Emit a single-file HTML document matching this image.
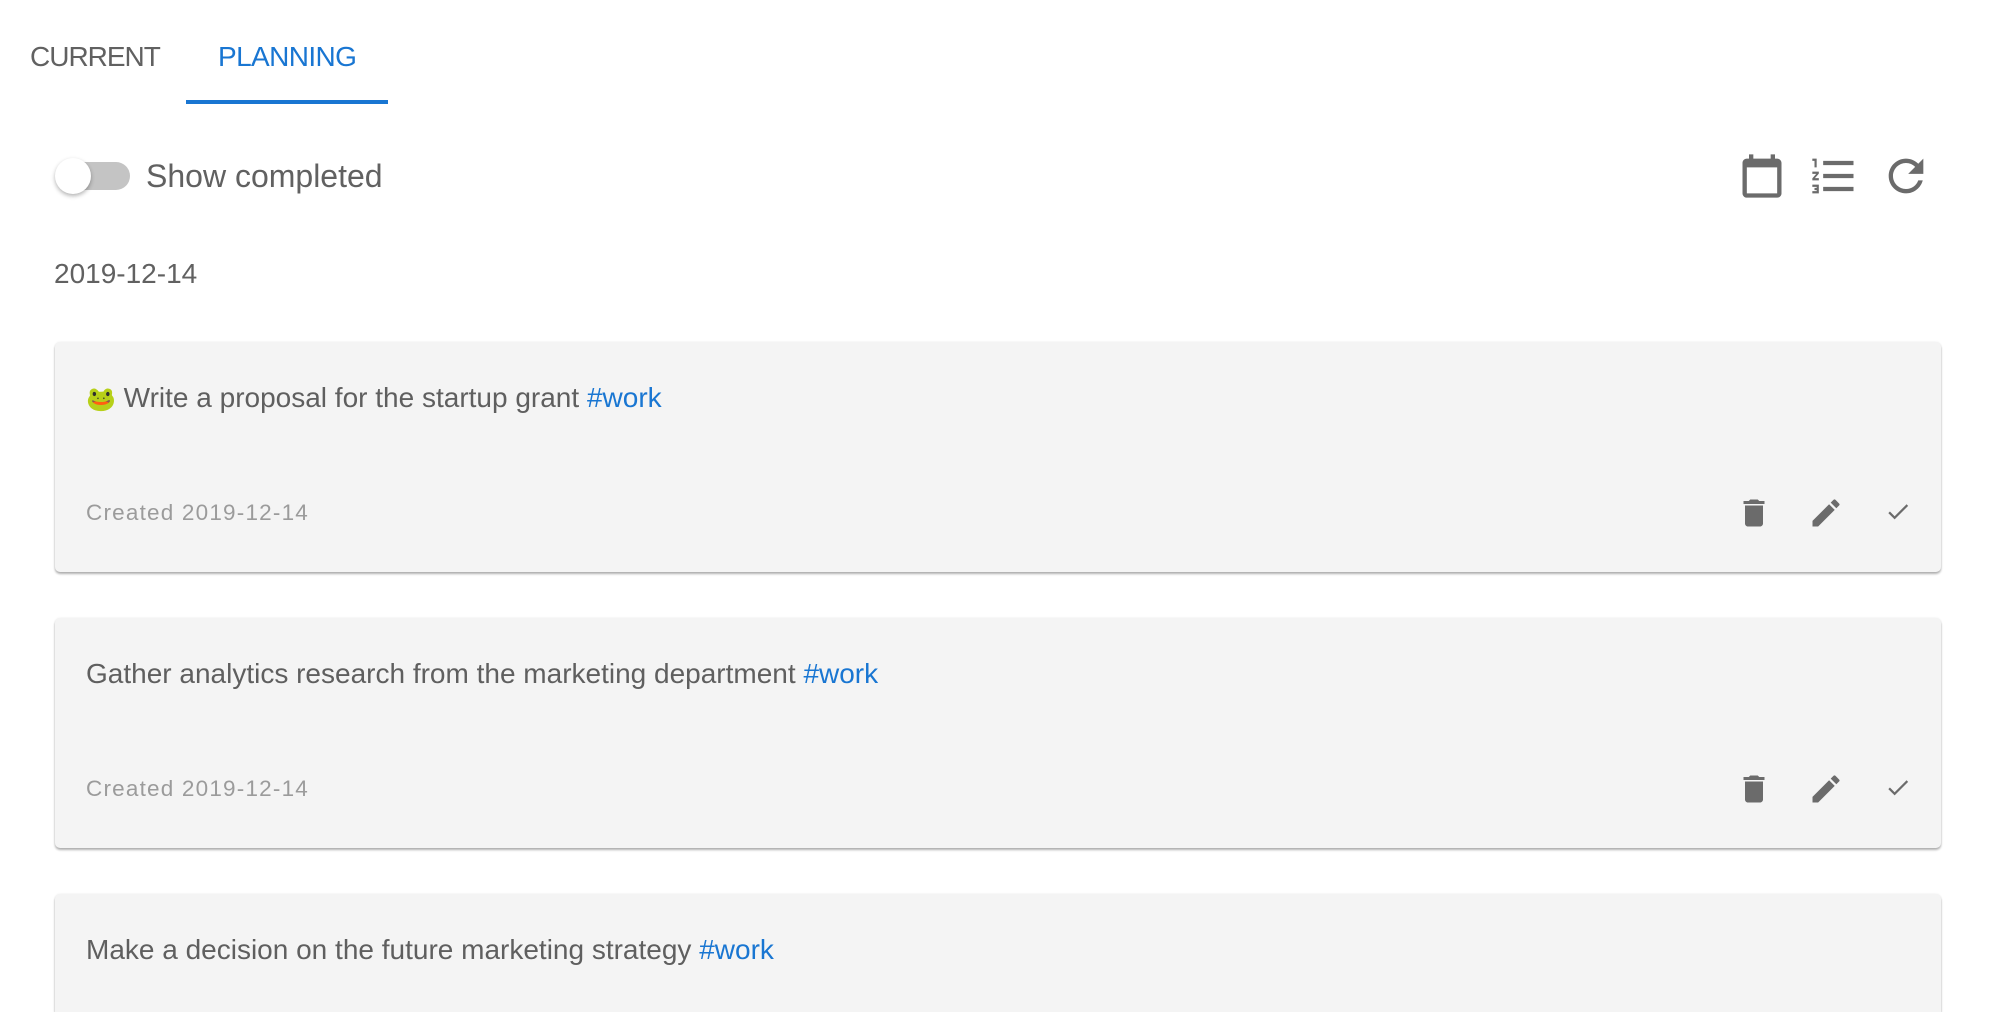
<!DOCTYPE html>
<html style="overflow:hidden;height:1012px"><head><meta charset="utf-8"><style>
body{margin:0;width:1998px;height:1012px;overflow:hidden;background:#fff;font-family:"Liberation Sans",sans-serif;color:#616161;position:relative}
.a{position:absolute;white-space:nowrap}
.card{position:absolute;left:55px;width:1886px;height:230px;background:#f4f4f4;border-radius:5px;box-shadow:0 2px 2px rgba(0,0,0,.3),0 0 2px rgba(0,0,0,.08)}
.t{position:absolute;left:31px;top:40px;font-size:28px;color:#5f5f5f}
.c{position:absolute;left:31px;top:158px;font-size:22.5px;color:#9b9b9b;letter-spacing:1.2px}
.tag{color:#1976d2}
.ic{position:absolute;top:153px}
</style></head><body>
<div class="a" style="left:30px;top:41px;font-size:28px;color:#616161;letter-spacing:-1px">CURRENT</div>
<div class="a" style="left:218px;top:41px;font-size:28px;color:#1976d2;letter-spacing:-.6px">PLANNING</div>
<div class="a" style="left:186px;top:100px;width:202px;height:4px;background:#1976d2"></div>

<div class="a" style="left:56px;top:162px;width:74px;height:28px;border-radius:14px;background:#c4c4c4"></div>
<div class="a" style="left:55px;top:158px;width:36px;height:36px;border-radius:50%;background:#fff;box-shadow:0 2px 4px rgba(0,0,0,.3)"></div>
<div class="a" style="left:146px;top:158px;font-size:32px;color:#616161">Show completed</div>

<svg class="a" style="left:1736px;top:150px" width="52" height="52" viewBox="0 0 24 24"><path fill="#6b6b6b" d="M19 4h-1V2h-2v2H8V2H6v2H5c-1.1 0-2 .9-2 2v14c0 1.1.9 2 2 2h14c1.1 0 2-.9 2-2V6c0-1.1-.9-2-2-2zm0 16H5V8h14v12z"/></svg>
<svg class="a" style="left:1808px;top:150px" width="52" height="52" viewBox="0 0 24 24"><path fill="#6b6b6b" d="M2 17h2v.5H3v1h1v.5H2v1h3v-4H2v1zm1-9h1V4H2v1h1v3zm-1 3h1.8L2 13.1v.9h3v-1H3.2L5 10.9V10H2v1zm5-6v2h14V5H7zm0 14h14v-2H7v2zm0-6h14v-2H7v2z"/></svg>
<svg class="a" style="left:1880px;top:150px" width="52" height="52" viewBox="0 0 24 24"><path fill="#6b6b6b" d="M17.65 6.35C16.2 4.9 14.21 4 12 4c-4.42 0-7.99 3.58-7.99 8s3.57 8 7.99 8c3.73 0 6.84-2.55 7.73-6h-2.08c-.82 2.33-3.04 4-5.65 4-3.31 0-6-2.69-6-6s2.69-6 6-6c1.66 0 3.14.69 4.22 1.78L13 11h7V4l-2.35 2.35z"/></svg>

<div class="a" style="left:54px;top:258px;font-size:28px;color:#616161">2019-12-14</div>

<div class="card" style="top:342px">
<div class="t"><span style="font-size:24px">🐸</span> Write a proposal for the startup grant <span class="tag">#work</span></div>
<div class="c">Created 2019-12-14</div>
<svg class="ic" style="left:1681px" width="36" height="36" viewBox="0 0 24 24"><path fill="#6b6b6b" d="M6 19c0 1.1.9 2 2 2h8c1.1 0 2-.9 2-2V7H6v12zM19 4h-3.5l-1-1h-5l-1 1H5v2h14V4z"/></svg>
<svg class="ic" style="left:1753px" width="36" height="36" viewBox="0 0 24 24"><path fill="#6b6b6b" d="M3 17.25V21h3.75L17.81 9.94l-3.75-3.75L3 17.25zM20.71 7.04a1 1 0 000-1.41l-2.34-2.34a1 1 0 00-1.41 0l-1.83 1.83 3.75 3.75 1.83-1.83z"/></svg>
<svg class="ic" style="left:1825px" width="36" height="36" viewBox="0 0 24 24"><path fill="#6b6b6b" d="M9 16.17L4.83 12l-1.42 1.41L9 19 21 7l-1.41-1.41z" transform="translate(3 2) scale(.75)"/></svg>
</div>

<div class="card" style="top:618px">
<div class="t">Gather analytics research from the marketing department <span class="tag">#work</span></div>
<div class="c">Created 2019-12-14</div>
<svg class="ic" style="left:1681px" width="36" height="36" viewBox="0 0 24 24"><path fill="#6b6b6b" d="M6 19c0 1.1.9 2 2 2h8c1.1 0 2-.9 2-2V7H6v12zM19 4h-3.5l-1-1h-5l-1 1H5v2h14V4z"/></svg>
<svg class="ic" style="left:1753px" width="36" height="36" viewBox="0 0 24 24"><path fill="#6b6b6b" d="M3 17.25V21h3.75L17.81 9.94l-3.75-3.75L3 17.25zM20.71 7.04a1 1 0 000-1.41l-2.34-2.34a1 1 0 00-1.41 0l-1.83 1.83 3.75 3.75 1.83-1.83z"/></svg>
<svg class="ic" style="left:1825px" width="36" height="36" viewBox="0 0 24 24"><path fill="#6b6b6b" d="M9 16.17L4.83 12l-1.42 1.41L9 19 21 7l-1.41-1.41z" transform="translate(3 2) scale(.75)"/></svg>
</div>

<div class="card" style="top:894px;height:118px;border-radius:5px 5px 0 0">
<div class="t">Make a decision on the future marketing strategy <span class="tag">#work</span></div>
</div>
</body></html>
